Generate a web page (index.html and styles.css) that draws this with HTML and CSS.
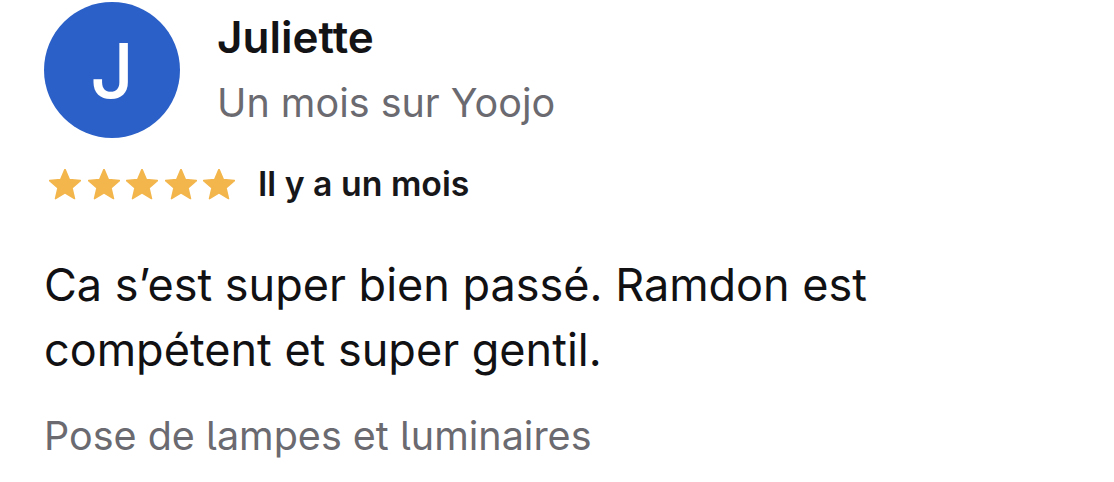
FILE: index.html
```html
<!DOCTYPE html>
<html lang="fr">
<head>
<meta charset="utf-8">
<link rel="stylesheet" href="styles.css">
</head>
<body>
<div class="review">
  <div class="header">
    <div class="avatar">J</div>
    <div class="who">
      <div class="name">Juliette</div>
      <div class="since">Un mois sur Yoojo</div>
    </div>
  </div>
  <div class="rating">
    <div class="stars">
      <svg viewBox="0 0 24 24"><path d="M12 .3L15.35 8.2 23.89 8.94 17.42 14.56 19.35 22.91 12 18.5 4.65 22.91 6.58 14.56 .11 8.94 8.65 8.2Z"/></svg>
      <svg viewBox="0 0 24 24"><path d="M12 .3L15.35 8.2 23.89 8.94 17.42 14.56 19.35 22.91 12 18.5 4.65 22.91 6.58 14.56 .11 8.94 8.65 8.2Z"/></svg>
      <svg viewBox="0 0 24 24"><path d="M12 .3L15.35 8.2 23.89 8.94 17.42 14.56 19.35 22.91 12 18.5 4.65 22.91 6.58 14.56 .11 8.94 8.65 8.2Z"/></svg>
      <svg viewBox="0 0 24 24"><path d="M12 .3L15.35 8.2 23.89 8.94 17.42 14.56 19.35 22.91 12 18.5 4.65 22.91 6.58 14.56 .11 8.94 8.65 8.2Z"/></svg>
      <svg viewBox="0 0 24 24"><path d="M12 .3L15.35 8.2 23.89 8.94 17.42 14.56 19.35 22.91 12 18.5 4.65 22.91 6.58 14.56 .11 8.94 8.65 8.2Z"/></svg>
    </div>
    <div class="when">Il y a un mois</div>
  </div>
  <p class="text">Ca s’est super bien passé. Ramdon est<br>compétent et super gentil.</p>
  <p class="service">Pose de lampes et luminaires</p>
</div>
</body>
</html>
```
FILE: styles.css
```css
html, body {
  margin: 0;
  background: #ffffff;
}
body {
  font-family: Inter, "Liberation Sans", sans-serif;
  color: #111114;
}
.review {
  padding: 2px 0 0 44px;
}
.header {
  display: flex;
  align-items: flex-start;
  gap: 37px;
}
.avatar {
  width: 136px;
  height: 136px;
  border-radius: 50%;
  background: #2b60c8;
  color: #fff;
  font-size: 76px;
  font-weight: 500;
  display: flex;
  align-items: center;
  justify-content: center;
}
.who {
  padding-top: 10px;
}
.name {
  font-size: 44px;
  font-weight: 600;
  line-height: 50px;
  color: #131316;
}
.since {
  font-size: 39.5px;
  font-weight: 400;
  line-height: 50px;
  margin-top: 16px;
  color: #6a6a70;
}
.rating {
  display: flex;
  align-items: center;
  gap: 23px;
  margin-top: 26px;
  height: 40px;
}
.stars {
  display: flex;
  gap: 6.5px;
  padding-left: 5px;
}
.stars svg {
  width: 32px;
  height: 31px;
  fill: #f3b64c;
  stroke: #f3b64c;
  stroke-width: 1.2;
  stroke-linejoin: round;
}
.when {
  font-size: 33.8px;
  font-weight: 600;
  line-height: 40px;
  color: #17171a;
}
.text {
  margin: 48px 0 0;
  font-size: 45px;
  line-height: 65px;
  color: #111114;
}
.service {
  margin: 31px 0 0;
  font-size: 39.5px;
  line-height: 46px;
  color: #6a6a70;
  font-feature-settings: "cv05";
}
```
